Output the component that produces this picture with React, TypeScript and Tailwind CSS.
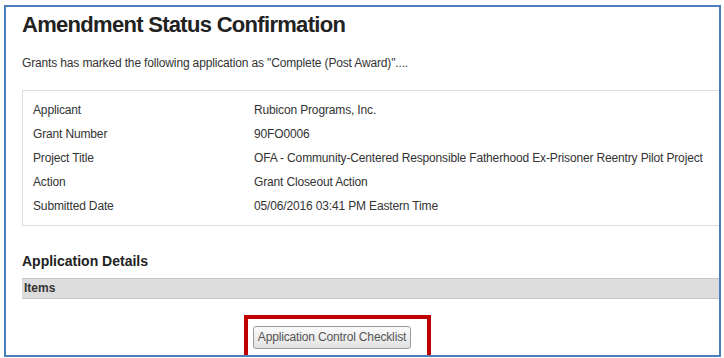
const rows: [string, string][] = [
  ["Applicant", "Rubicon Programs, Inc."],
  ["Grant Number", "90FO0006"],
  ["Project Title", "OFA - Community-Centered Responsible Fatherhood Ex-Prisoner Reentry Pilot Project"],
  ["Action", "Grant Closeout Action"],
  ["Submitted Date", "05/06/2016 03:41 PM Eastern Time"],
];

export default function App() {
  return (
    <div
      className="w-[724px] h-[358px] bg-white pt-[5px] pl-[4px] overflow-hidden"
      style={{ fontFamily: '"Liberation Sans", Arial, sans-serif' }}
    >
      <div className="w-[717px] h-[352px] border-2 border-[#4a7ebb] pl-[16px] overflow-hidden">
        <h1 className="mt-[5px] text-[22px] leading-[26px] font-bold text-[#222] tracking-[-0.7px]">
          Amendment Status Confirmation
        </h1>
        <p className="mt-[17px] text-[12px] leading-[16px] text-[#333] tracking-[-0.15px]">
          Grants has marked the following application as "Complete (Post Award)"....
        </p>

        <div className="mt-[19px] border border-[#ddd] pl-[10px] py-[7px] w-[700px]">
          {rows.map(([label, value]) => (
            <div key={label} className="flex text-[12px] leading-[24px] text-[#333] tracking-[-0.15px]">
              <div className="w-[221px] shrink-0">{label}</div>
              <div>{value}</div>
            </div>
          ))}
        </div>

        <h2 className="mt-[25px] text-[14px] leading-[20px] font-bold text-[#222]">
          Application Details
        </h2>
        <div className="mt-[7px] w-[700px] border-y border-[#c6c6c6] bg-[#dddddd] pl-[2px] text-[12px] leading-[19px] font-bold text-[#333]">
          Items
        </div>

        <div className="mt-[16px] ml-[222px] w-[187px] h-[40px] border-4 border-b-0 border-[#c00000] pl-[5px] pt-[5px]">
          <button className="w-[158px] h-[23px] rounded-[3px] border border-[#9a9a9a] bg-gradient-to-b from-[#fbfbfb] to-[#e2e2e2] text-[12px] leading-[20px] text-[#555] tracking-[-0.15px] text-center">
            Application Control Checklist
          </button>
        </div>
      </div>
    </div>
  );
}
